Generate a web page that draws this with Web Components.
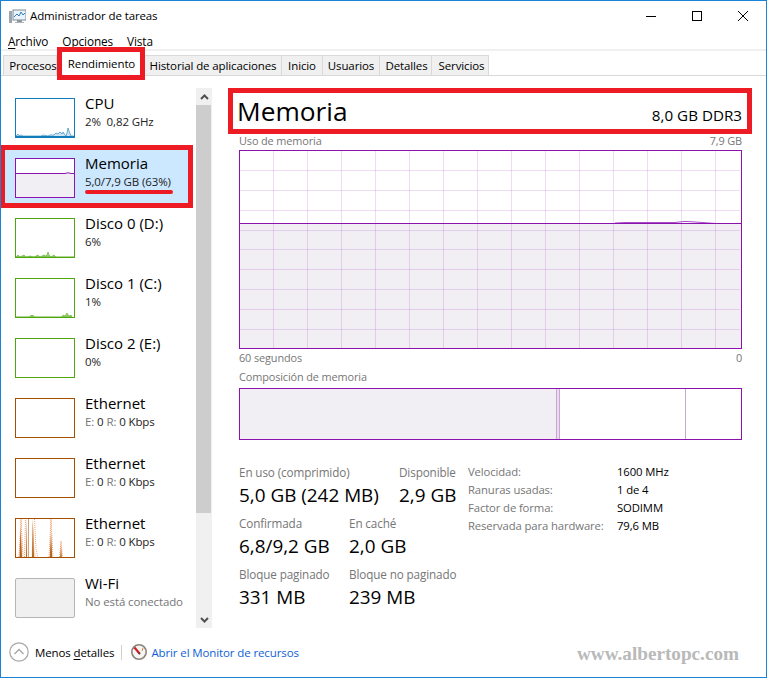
<!DOCTYPE html>
<html lang="es">
<head>
<meta charset="utf-8">
<title>Administrador de tareas</title>
<style>
  html, body { margin: 0; padding: 0; background: #fff; }
  body {
    font-family: "Open Sans", "Liberation Sans", sans-serif;
    font-size: 11.5px;
    letter-spacing: -0.01em;
    color: #000;
  }
  u { text-underline-offset: 2px; }
  svg { display: block; }
</style>
</head>
<body>
<task-manager>
  <title-bar slot="top">Administrador de tareas</title-bar>
  <menu-bar slot="top">
    <span><u>A</u>rchivo</span>
    <span><u>O</u>pciones</span>
    <span><u>V</u>ista</span>
  </menu-bar>
  <tab-strip slot="top">
    <tm-tab w="54" pl="6">Procesos</tm-tab>
    <tm-tab w="88" selected pl="1">Rendimiento</tm-tab>
    <tm-tab w="137">Historial de aplicaciones</tm-tab>
    <tm-tab w="41">Inicio</tm-tab>
    <tm-tab w="57">Usuarios</tm-tab>
    <tm-tab w="52" pl="2">Detalles</tm-tab>
    <tm-tab w="57" pl="3">Servicios</tm-tab>
  </tab-strip>

  <side-list slot="side">
    <side-item name="CPU" color="#117dbb">
      <svg slot="thumb" width="58" height="38" viewBox="0 0 58 38">
        <path d="M0 37L2 35 3 37 5 36 7 37H25L27 36 32 37 34 36 38 36 40 34 42 35 44 33 46 35 47 33 49 36 50 37 51 34 52 29 53 32 55 37H58V38H0Z" fill="#cfe3f0" stroke="#117dbb" stroke-width=".6"/>
        <rect y="37" width="58" height="1" fill="#117dbb"/>
      </svg>
      2%&nbsp; 0,82 GHz
    </side-item>
    <side-item name="Memoria" color="#8b12ae" selected>
      <svg slot="thumb" width="58" height="38" viewBox="0 0 58 38">
        <rect y="14" width="58" height="24" fill="#f1eff3"/>
        <path d="M0 14.5H49Q52 13 55 14.5H58" fill="none" stroke="#8b12ae"/>
      </svg>
      5,0/7,9 GB (63%)
    </side-item>
    <side-item name="Disco 0 (D:)" color="#4da60c">
      <svg slot="thumb" width="58" height="38" viewBox="0 0 58 38">
        <path d="M0 38L2 36 4 38 8 36 10 38 14 37 18 38 22 36 24 38 28 36 30 37 31 36 32 33 33 36 35 38 38 36 40 38H58Z" fill="#9ccb78" stroke="#4da60c" stroke-width=".5"/>
      </svg>
      6%
    </side-item>
    <side-item name="Disco 1 (C:)" color="#4da60c">
      <svg slot="thumb" width="58" height="38" viewBox="0 0 58 38">
        <path d="M0 38H14L15 36 16 37 17 36 18 38H46L47 36 49 37 51 34 52 36 54 37 55 36 56 38Z" fill="#9ccb78" stroke="#4da60c" stroke-width=".5"/>
      </svg>
      1%
    </side-item>
    <side-item name="Disco 2 (E:)" color="#4da60c">
      <svg slot="thumb" width="58" height="38"></svg>
      0%
    </side-item>
    <side-item name="Ethernet" color="#a74f01">
      <svg slot="thumb" width="58" height="38"></svg>
      <i>E:</i> 0 <i>R:</i> 0 Kbps
    </side-item>
    <side-item name="Ethernet" color="#a74f01">
      <svg slot="thumb" width="58" height="38"></svg>
      <i>E:</i> 0 <i>R:</i> 0 Kbps
    </side-item>
    <side-item name="Ethernet" color="#a74f01">
      <svg slot="thumb" width="58" height="38" viewBox="0 0 58 38">
        <path d="M3.5 38L5 0 6.5 38ZM9.5 38L10.5 0 11.5 38ZM15.5 38L17 0 18.5 30 20 38ZM33.5 38L35 0 36.5 38ZM44 38L45 22 46 38Z" fill="#f9e0cf"/>
        <path d="M3.5 38L4.5 8 6 38ZM10 38L10.5 0 11 38ZM12 38V0H12.6V38ZM16 38L16.8 0 18 38ZM33.8 38L35 14 36.2 38ZM44.2 38L45 26 45.8 38Z" fill="#b5651d"/>
        <path d="M3 38L5 0 7 38M8.5 38L9.5 0M18.5 0L20 30 22 38M33 38L35 0 37 38M43.5 38L45 22 46.5 38" fill="none" stroke="#ea9a66" stroke-width=".9" stroke-dasharray="1 1"/>
      </svg>
      <i>E:</i> 0 <i>R:</i> 0 Kbps
    </side-item>
    <side-item name="Wi-Fi" color="#b5b5b5" off>
      <svg slot="thumb" width="58" height="38"></svg>
      <i>No está conectado</i>
    </side-item>
  </side-list>
  <scroll-bar slot="side"></scroll-bar>

  <detail-head slot="detail" title="Memoria" info="8,0 GB DDR3"></detail-head>
  <label-row slot="detail" left="Uso de memoria" right="7,9 GB" h="16" up="4"></label-row>
  <mem-graph slot="detail"></mem-graph>
  <label-row slot="detail" left="60 segundos" right="0" h="18" up="2"></label-row>
  <label-row slot="detail" left="Composición de memoria" h="21" up="2"></label-row>
  <comp-bar slot="detail"></comp-bar>
  <stat-area slot="detail">
    <stat-row>
      <stat-block w="160" label="En uso (comprimido)" value="5,0 GB (242 MB)"></stat-block>
      <stat-block label="Disponible" value="2,9 GB"></stat-block>
    </stat-row>
    <stat-row>
      <stat-block w="110" label="Confirmada" value="6,8/9,2 GB"></stat-block>
      <stat-block label="En caché" value="2,0 GB"></stat-block>
    </stat-row>
    <stat-row>
      <stat-block w="110" label="Bloque paginado" value="331 MB"></stat-block>
      <stat-block label="Bloque no paginado" value="239 MB"></stat-block>
    </stat-row>
    <spec-table slot="specs">
      <span class="k">Velocidad:</span><span>1600 MHz</span>
      <span class="k">Ranuras usadas:</span><span>1 de 4</span>
      <span class="k">Factor de forma:</span><span>SODIMM</span>
      <span class="k">Reservada para hardware:</span><span>79,6 MB</span>
    </spec-table>
  </stat-area>

  <foot-bar slot="foot">www.albertopc.com</foot-bar>
</task-manager>

<script>
class taskManager extends HTMLElement {
  constructor() {
    super();
    this.attachShadow({mode: 'open'}).innerHTML = `
    <style>
      :host{
        display:flex;
        flex-direction:column;
        box-sizing:border-box;
        width:767px;
        height:678px;
        border:1px solid #1883d7;
        background:#fff;
        overflow:hidden;
      }
      .main{display:flex;flex:1;min-height:0;}
      .side{display:flex;width:227px;flex:none;}
      .detail{display:flex;flex-direction:column;width:524px;padding-top:12px;}
    </style>
    <slot name="top"></slot>
    <div class="main">
      <div class="side"><slot name="side"></slot></div>
      <div class="detail"><slot name="detail"></slot></div>
    </div>
    <slot name="foot"></slot>`;
  }
}

class titleBar extends HTMLElement {
  constructor() {
    super();
    this.attachShadow({mode: 'open'}).innerHTML = `
    <style>
      :host{display:flex;align-items:center;height:30px;padding-left:8px;}
      .text{margin-left:4px;flex:1;padding-bottom:2px;}
      .btn{width:46px;height:30px;display:flex;align-items:center;justify-content:center;}
    </style>
    <svg width="17" height="15" viewBox="0 0 17 15">
      <rect x="0" y="2" width="3" height="12" fill="#9aa5ad"/>
      <rect x="4" y="1" width="13" height="10" fill="#eaf3fa" stroke="#7c8b96"/>
      <path d="M5 8L8 5 10 7 12 3 14 6 16 4" fill="none" stroke="#2f7fc0"/>
      <rect x="8" y="11" width="5" height="2" fill="#8d979e"/>
      <rect x="6" y="13" width="9" height="1" fill="#aab3b9"/>
    </svg>
    <span class="text"><slot></slot></span>
    <span class="btn"><svg width="10" height="10"><rect y="5" width="10" height="1" fill="#000"/></svg></span>
    <span class="btn"><svg width="10" height="10"><rect x=".5" y=".5" width="9" height="9" fill="none" stroke="#000"/></svg></span>
    <span class="btn"><svg width="10" height="10"><path d="M0 0L10 10M10 0L0 10" stroke="#000" fill="none"/></svg></span>`;
  }
}

class menuBar extends HTMLElement {
  constructor() {
    super();
    this.attachShadow({mode: 'open'}).innerHTML = `
    <style>
      :host{display:flex;gap:14px;height:18px;padding:2px 0 0 7px;box-sizing:border-box;line-height:16px;font-size:11.8px;}
    </style>
    <slot></slot>`;
  }
}

class tabStrip extends HTMLElement {
  constructor() {
    super();
    this.attachShadow({mode: 'open'}).innerHTML = `
    <style>
      :host{
        display:flex;
        box-sizing:border-box;
        height:27px;
        padding:4px 0 0 2px;
        border-top:2px solid #f0f0f0;
        border-bottom:1px solid #d9d9d9;
      }
    </style>
    <slot></slot>`;
  }
}

class tmTab extends HTMLElement {
  constructor() {
    super();
    this.attachShadow({mode: 'open'}).innerHTML = `
    <style>
      :host{
        display:flex;
        align-items:center;
        justify-content:center;
        box-sizing:border-box;
        flex:none;
        height:20px;
        background:#f0f0f0;
        border:1px solid #d9d9d9;
        border-bottom:none;
        border-left:none;
        white-space:nowrap;
      }
      :host(:first-child){border-left:1px solid #d9d9d9;}
      :host([selected]){
        height:33px;
        margin:-8px 0 -5px;
        border:5px solid #ed1c24;
        background:#fff;
      }
    </style>
    <slot></slot>`;
    this.style.width = this.getAttribute('w') + 'px';
    if (this.getAttribute('pl')) this.style.paddingLeft = this.getAttribute('pl') + 'px';
  }
}

class sideList extends HTMLElement {
  constructor() {
    super();
    this.attachShadow({mode: 'open'}).innerHTML = `
    <style>
      :host{display:flex;flex-direction:column;width:192px;flex:none;padding-top:12px;}
    </style>
    <slot></slot>`;
  }
}

class sideItem extends HTMLElement {
  constructor() {
    super();
    const color = this.getAttribute('color');
    this.attachShadow({mode: 'open'}).innerHTML = `
    <style>
      :host{
        display:flex;
        box-sizing:border-box;
        height:60px;
        padding:10px 0 0 14px;
        position:relative;
      }
      :host([selected]){
        height:63px;
        width:193px;
        margin:-3px 0 0 -1px;
        padding:8px 0 0 10px;
        border:5px solid #ed1c24;
        background:#cce8ff;
      }
      .thumb{
        box-sizing:border-box;
        width:60px;
        height:40px;
        flex:none;
        border:1px solid ${color};
        background:#fff;
      }
      :host([off]) .thumb{background:#f0f0f0;border-radius:2px;}
      .text{margin:-4px 0 0 10px;white-space:nowrap;}
      .name{font-size:15px;line-height:19px;letter-spacing:0;}
      .sub{line-height:16px;margin-top:1px;color:#222;}
      ::slotted(i){font-style:normal;color:#767676;}
      .under{
        position:absolute;
        left:80px;
        top:40px;
        width:88px;
        height:4px;
        border-radius:2px;
        background:#ed1c24;
        display:none;
      }
      :host([selected]) .under{display:block;}
    </style>
    <div class="thumb"><slot name="thumb"></slot></div>
    <div class="text">
      <div class="name">${this.getAttribute('name')}</div>
      <div class="sub"><slot></slot></div>
    </div>
    <div class="under"></div>`;
  }
}

class scrollBar extends HTMLElement {
  constructor() {
    super();
    this.attachShadow({mode: 'open'}).innerHTML = `
    <style>
      :host{
        display:flex;
        flex-direction:column;
        box-sizing:border-box;
        width:16px;
        height:540px;
        margin:12px 0 0 3px;
        background:#f0f0f0;
      }
      .arrow{height:17px;display:flex;align-items:center;justify-content:center;flex:none;}
      .thumb{height:408px;width:15px;background:#cdcdcd;flex:none;}
      .end{margin-top:auto;}
    </style>
    <div class="arrow"><svg width="9" height="6"><path d="M1 5L4.5 1.5 8 5" fill="none" stroke="#505050" stroke-width="2"/></svg></div>
    <div class="thumb"></div>
    <div class="arrow end"><svg width="9" height="6"><path d="M1 1L4.5 4.5 8 1" fill="none" stroke="#505050" stroke-width="2"/></svg></div>`;
  }
}

class detailHead extends HTMLElement {
  constructor() {
    super();
    this.attachShadow({mode: 'open'}).innerHTML = `
    <style>
      :host{
        display:flex;
        justify-content:space-between;
        align-items:baseline;
        box-sizing:border-box;
        height:46px;
        border:5px solid #ed1c24;
        padding:0 5px 0 4px;
        line-height:36px;
      }
      .t{font-size:26.3px;letter-spacing:0;}
      .i{font-size:15.2px;letter-spacing:0;}
    </style>
    <span class="t">${this.getAttribute('title')}</span>
    <span class="i">${this.getAttribute('info')}</span>`;
    this.removeAttribute('title');
  }
}

class labelRow extends HTMLElement {
  constructor() {
    super();
    const right = this.getAttribute('right') || '';
    this.attachShadow({mode: 'open'}).innerHTML = `
    <style>
      :host{
        display:flex;
        justify-content:space-between;
        align-items:center;
        box-sizing:border-box;
        margin:0 10px 0 11px;
        font-size:10.9px;
        color:#767676;
      }
    </style>
    <span>${this.getAttribute('left')}</span>
    <span>${right}</span>`;
    this.style.height = this.getAttribute('h') + 'px';
    this.style.paddingBottom = (this.getAttribute('up') || 0) + 'px';
  }
}

class memGraph extends HTMLElement {
  constructor() {
    super();
    let grid = '';
    for (let x = 33; x < 501; x += 34) grid += `<rect x="${x}" width="1" height="197"/>`;
    for (const y of [19, 39, 59, 79, 98, 118, 138, 158, 178]) grid += `<rect y="${y}" width="500" height="1"/>`;
    this.attachShadow({mode: 'open'}).innerHTML = `
    <style>
      :host{
        display:block;
        box-sizing:border-box;
        height:199px;
        margin:0 10px 0 11px;
        border:1px solid #8b12ae;
      }
    </style>
    <svg width="501" height="197" viewBox="0 0 501 197">
      <rect y="72" width="501" height="125" fill="#f1eff3"/>
      <g fill="#8b12ae" fill-opacity=".15" shape-rendering="crispEdges">${grid}</g>
      <rect y="72" width="501" height="1" fill="#8b12ae"/>
      <path d="M375 72L385 71.5H435Q445 69.5 455 71L476 72.5" fill="none" stroke="#8b12ae" stroke-opacity=".75"/>
    </svg>`;
  }
}

class compBar extends HTMLElement {
  constructor() {
    super();
    this.attachShadow({mode: 'open'}).innerHTML = `
    <style>
      :host{
        display:flex;
        box-sizing:border-box;
        height:52px;
        margin:0 10px 0 11px;
        border:1px solid #8b12ae;
      }
      .use{width:316px;background:#f1eff3;}
      .mod{width:2px;background:#eadbee;border:solid #c9a7d4;border-width:0 1px;}
      .stb{width:125px;border-right:1px solid #c9a7d4;}
    </style>
    <div class="use"></div><div class="mod"></div><div class="stb"></div>`;
  }
}

class statArea extends HTMLElement {
  constructor() {
    super();
    this.attachShadow({mode: 'open'}).innerHTML = `
    <style>
      :host{display:flex;margin:0 0 0 11px;padding-top:23px;}
      .rows{width:229px;flex:none;padding-top:1px;}
    </style>
    <div class="rows"><slot></slot></div>
    <slot name="specs"></slot>`;
  }
}

class statRow extends HTMLElement {
  constructor() {
    super();
    this.attachShadow({mode: 'open'}).innerHTML = `
    <style>
      :host{display:flex;height:51px;white-space:nowrap;}
    </style>
    <slot></slot>`;
  }
}

class statBlock extends HTMLElement {
  constructor() {
    super();
    this.attachShadow({mode: 'open'}).innerHTML = `
    <style>
      :host{display:block;flex:none;}
      .l{color:#767676;line-height:16px;font-size:11.7px;}
      .v{font-size:18.9px;line-height:24px;margin-top:3px;letter-spacing:0;}
    </style>
    <div class="l">${this.getAttribute('label')}</div>
    <div class="v">${this.getAttribute('value')}</div>`;
    if (this.getAttribute('w')) this.style.width = this.getAttribute('w') + 'px';
  }
}

class specTable extends HTMLElement {
  constructor() {
    super();
    this.attachShadow({mode: 'open'}).innerHTML = `
    <style>
      :host{
        display:grid;
        grid-template-columns:149px auto;
        grid-auto-rows:18px;
        line-height:18px;
        align-self:flex-start;
        white-space:nowrap;
        font-size:11.3px;
      }
      ::slotted(.k){color:#767676;}
    </style>
    <slot></slot>`;
  }
}

class footBar extends HTMLElement {
  constructor() {
    super();
    this.attachShadow({mode: 'open'}).innerHTML = `
    <style>
      :host{
        display:flex;
        align-items:center;
        box-sizing:border-box;
        height:47px;
        padding:0 27px 3px 8px;
        white-space:nowrap;
      }
      .less{margin-left:6px;}
      u{text-underline-offset:2px;}
      .sep{width:1px;height:15px;background:#d0d0d0;margin:0 9px 0 7px;}
      .link{margin-left:4px;color:#0f62d6;}
      .mark{
        margin-left:auto;
        font:bold 19.2px "Liberation Serif",serif;
        letter-spacing:0;
        color:#b9b9b9;
        padding-top:4px;
      }
    </style>
    <svg width="20" height="20" viewBox="0 0 20 20">
      <circle cx="10" cy="10" r="9.2" fill="#fff" stroke="#a8a8a8" stroke-width="1.2"/>
      <path d="M5.5 12L10 7.5 14.5 12" fill="none" stroke="#a8a8a8" stroke-width="1.4"/>
    </svg>
    <span class="less">Menos <u>d</u>etalles</span>
    <span class="sep"></span>
    <svg width="16" height="16" viewBox="0 0 16 16">
      <circle cx="8" cy="8" r="7.2" fill="#f7f5f1" stroke="#8a847c" stroke-width="1.6"/>
      <path d="M3.5 3.5L8.5 9.5" stroke="#d0202a" stroke-width="2.2"/>
      <path d="M12 4L11 7" stroke="#c98a3c"/>
      <circle cx="8.5" cy="9.5" r="1" fill="#444"/>
    </svg>
    <span class="link">Abrir el Monitor de recursos</span>
    <span class="mark"><slot></slot></span>`;
  }
}

customElements.define('task-manager', taskManager);
customElements.define('title-bar', titleBar);
customElements.define('menu-bar', menuBar);
customElements.define('tab-strip', tabStrip);
customElements.define('tm-tab', tmTab);
customElements.define('side-list', sideList);
customElements.define('side-item', sideItem);
customElements.define('scroll-bar', scrollBar);
customElements.define('detail-head', detailHead);
customElements.define('label-row', labelRow);
customElements.define('mem-graph', memGraph);
customElements.define('comp-bar', compBar);
customElements.define('stat-area', statArea);
customElements.define('stat-row', statRow);
customElements.define('stat-block', statBlock);
customElements.define('spec-table', specTable);
customElements.define('foot-bar', footBar);
</script>
</body>
</html>
